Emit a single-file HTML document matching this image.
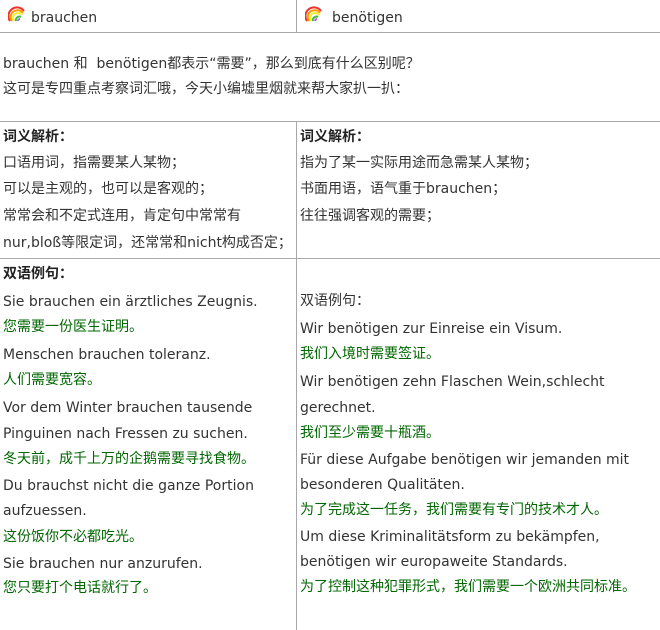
<!DOCTYPE html>
<html><head><meta charset="utf-8"><style>
body{margin:0;width:660px;height:630px;background:#fff;position:relative;overflow:hidden;font-family:"DejaVu Sans","Noto Sans CJK SC",sans-serif;font-size:14px;color:#333}
.t{position:absolute;white-space:nowrap;line-height:18px}
.g{color:#006600}
.b{font-weight:bold;color:#222}
.h{position:absolute;left:0;width:660px;height:1px;background:#a8a8a8}
.v{position:absolute;left:296px;width:1px;background:#a8a8a8}
svg{position:absolute}
</style></head><body>
<div class="h" style="top:32px"></div>
<div class="h" style="top:121px"></div>
<div class="h" style="top:258px"></div>
<div class="v" style="top:0;height:32px"></div>
<div class="v" style="top:121px;height:509px"></div>
<svg style="left:8px;top:6px" width="18" height="16" viewBox="0 0 18 16">
<path d="M2 15 A8 8 0 0 1 16 5" stroke="#e33" stroke-width="2" fill="none"/>
<path d="M4 15 A6.5 6.5 0 0 1 15 7" stroke="#f90" stroke-width="2" fill="none"/>
<path d="M6 15 A5 5 0 0 1 14 9" stroke="#ee3" stroke-width="2" fill="none"/>
<path d="M8 15 A3.5 3.5 0 0 1 13 11" stroke="#4b4" stroke-width="2" fill="none"/>
<path d="M10 15 A2 2 0 0 1 12 13" stroke="#a6e" stroke-width="2" fill="none"/>
</svg>
<svg style="left:305px;top:6px" width="18" height="16" viewBox="0 0 18 16">
<path d="M2 15 A8 8 0 0 1 16 5" stroke="#e33" stroke-width="2" fill="none"/>
<path d="M4 15 A6.5 6.5 0 0 1 15 7" stroke="#f90" stroke-width="2" fill="none"/>
<path d="M6 15 A5 5 0 0 1 14 9" stroke="#ee3" stroke-width="2" fill="none"/>
<path d="M8 15 A3.5 3.5 0 0 1 13 11" stroke="#4b4" stroke-width="2" fill="none"/>
<path d="M10 15 A2 2 0 0 1 12 13" stroke="#a6e" stroke-width="2" fill="none"/>
</svg>
<div class="t" style="left:31px;top:9px">brauchen</div>
<div class="t" style="left:332px;top:9px">benötigen</div>
<div class="t" style="left:3px;top:55px">brauchen 和&nbsp; benötigen都表示“需要”，那么到底有什么区别呢？</div>
<div class="t" style="left:3px;top:80px">这可是专四重点考察词汇哦，今天小编墟里烟就来帮大家扒一扒：</div>

<div class="t b" style="left:3px;top:128px">词义解析：</div>
<div class="t" style="left:3px;top:154px">口语用词，指需要某人某物；</div>
<div class="t" style="left:3px;top:180px">可以是主观的，也可以是客观的；</div>
<div class="t" style="left:3px;top:207px">常常会和不定式连用，肯定句中常常有</div>
<div class="t" style="left:3px;top:234px">nur,bloß等限定词，还常常和nicht构成否定；</div>
<div class="t b" style="left:300px;top:128px">词义解析：</div>
<div class="t" style="left:300px;top:154px">指为了某一实际用途而急需某人某物；</div>
<div class="t" style="left:300px;top:180px">书面用语，语气重于brauchen；</div>
<div class="t" style="left:300px;top:207px">往往强调客观的需要；</div>

<div class="t b" style="left:3px;top:265px">双语例句：</div>
<div class="t" style="left:3px;top:293px">Sie brauchen ein ärztliches Zeugnis.</div>
<div class="t g" style="left:3px;top:318px">您需要一份医生证明。</div>
<div class="t" style="left:3px;top:346px">Menschen brauchen toleranz.</div>
<div class="t g" style="left:3px;top:371px">人们需要宽容。</div>
<div class="t" style="left:3px;top:399px">Vor dem Winter brauchen tausende</div>
<div class="t" style="left:3px;top:425px">Pinguinen nach Fressen zu suchen.</div>
<div class="t g" style="left:3px;top:450px">冬天前，成千上万的企鹅需要寻找食物。</div>
<div class="t" style="left:3px;top:477px">Du brauchst nicht die ganze Portion</div>
<div class="t" style="left:3px;top:502px">aufzuessen.</div>
<div class="t g" style="left:3px;top:528px">这份饭你不必都吃光。</div>
<div class="t" style="left:3px;top:555px">Sie brauchen nur anzurufen.</div>
<div class="t g" style="left:3px;top:579px">您只要打个电话就行了。</div>

<div class="t" style="left:300px;top:292px">双语例句：</div>
<div class="t" style="left:300px;top:320px">Wir benötigen zur Einreise ein Visum.</div>
<div class="t g" style="left:300px;top:345px">我们入境时需要签证。</div>
<div class="t" style="left:300px;top:373px">Wir benötigen zehn Flaschen Wein,schlecht</div>
<div class="t" style="left:300px;top:399px">gerechnet.</div>
<div class="t g" style="left:300px;top:424px">我们至少需要十瓶酒。</div>
<div class="t" style="left:300px;top:451px">Für diese Aufgabe benötigen wir jemanden mit</div>
<div class="t" style="left:300px;top:476px">besonderen Qualitäten.</div>
<div class="t g" style="left:300px;top:501px">为了完成这一任务，我们需要有专门的技术才人。</div>
<div class="t" style="left:300px;top:528px">Um diese Kriminalitätsform zu bekämpfen,</div>
<div class="t" style="left:300px;top:553px">benötigen wir europaweite Standards.</div>
<div class="t g" style="left:300px;top:578px">为了控制这种犯罪形式，我们需要一个欧洲共同标准。</div>
</body></html>
